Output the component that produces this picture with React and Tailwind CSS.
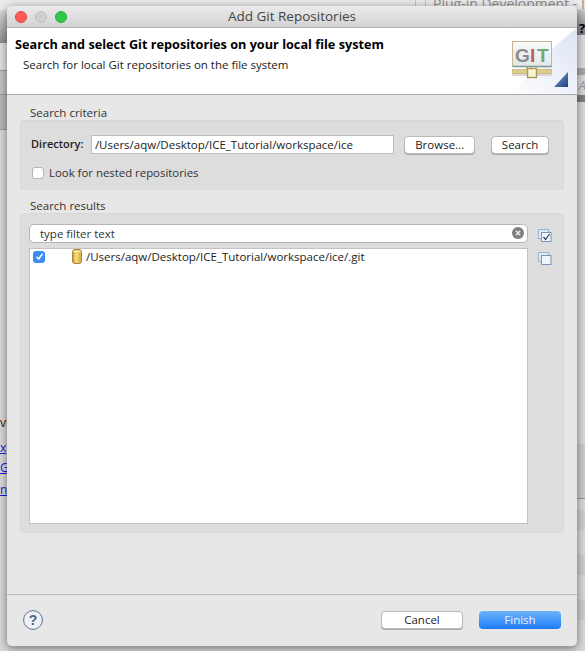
const FONT = "font-['Open_Sans','Liberation_Sans',sans-serif]";

function GitLogo() {
  return (
    <svg width="72" height="66" viewBox="0 0 72 66" className="absolute right-0 top-0">
      <defs>
        <linearGradient id="banner" x1="0" y1="1" x2="1" y2="0">
          <stop offset="0" stopColor="#ffffff" />
          <stop offset="0.5" stopColor="#eef1fa" />
          <stop offset="1" stopColor="#dde4f5" />
        </linearGradient>
        <linearGradient id="tri" x1="0" y1="0" x2="1" y2="1">
          <stop offset="0" stopColor="#86a5d4" />
          <stop offset="1" stopColor="#1f3f80" />
        </linearGradient>
        <linearGradient id="screen" x1="0" y1="0" x2="0" y2="1">
          <stop offset="0" stopColor="#fafafa" />
          <stop offset="1" stopColor="#e0e6e6" />
        </linearGradient>
      </defs>
      <path d="M0 66 C22 58 34 28 72 0 V66 Z" fill="url(#banner)" />
      <rect x="7.5" y="13.5" width="39" height="25" fill="url(#screen)" stroke="#c9b58f" />
      <path d="M7.5 38.5H46.5" stroke="#7d9a98" strokeWidth="1.5" />
      <text x="10" y="34" fontFamily="Liberation Sans, sans-serif" fontWeight="700" fontSize="19" fill="#8b8b8b">G</text>
      <text x="25" y="34" fontFamily="Liberation Sans, sans-serif" fontWeight="700" fontSize="19" fill="#b9605f">I</text>
      <text x="32" y="34" fontFamily="Liberation Sans, sans-serif" fontWeight="700" fontSize="19" fill="#6fa877">T</text>
      <path d="M7 47H47" stroke="#e2d5da" strokeWidth="2" />
      <rect x="7.5" y="41.5" width="39" height="4" fill="#dccf8c" stroke="#b7a65c" strokeWidth="0.6" />
      <path d="M22 39V41M26 39V41" stroke="#a89a58" strokeWidth="1.2" />
      <rect x="22.5" y="40.5" width="9" height="9" fill="#fbf3cf" stroke="#a89a58" strokeWidth="1.4" />
      <path d="M49 59 L63 59 L63 44 Z" fill="url(#tri)" />
    </svg>
  );
}

function MacButton({ children, className = '' }) {
  return (
    <button
      type="button"
      className={`h-[18px] bg-white rounded-[4px] border border-[#b9b9b9] shadow-[0_1px_0_#a9a9a9] text-[11.5px] leading-[16px] text-[#222] text-center ${className}`}
    >
      {children}
    </button>
  );
}

function BlueCheck() {
  return (
    <span className="w-3 h-3 rounded-[3px] bg-[#3b8df5] flex items-center justify-center shrink-0">
      <svg width="9" height="9" viewBox="0 0 9 9">
        <path d="M1.5 4.8 L3.6 7 L7.6 1.6" fill="none" stroke="#fff" strokeWidth="1.5" />
      </svg>
    </span>
  );
}

function StackIcon({ checked }) {
  return (
    <svg width="14" height="13" viewBox="0 0 14 13">
      <rect x="0.5" y="0.5" width="10" height="9" fill="#dfe8f3" stroke="#9fb3cf" />
      <rect x="3.5" y="3.5" width="9.5" height="9" fill="#f1f6fc" stroke="#7f95b5" />
      {checked && <path d="M5.5 8 L7.6 10.5 L11.5 5" fill="none" stroke="#2c3f5c" strokeWidth="1.2" />}
    </svg>
  );
}

function RepoIcon() {
  return (
    <svg width="10" height="15" viewBox="0 0 10 15" className="shrink-0">
      <defs>
        <linearGradient id="can" x1="0" y1="0" x2="1" y2="0">
          <stop offset="0" stopColor="#c99a2c" />
          <stop offset="0.4" stopColor="#f9df7c" />
          <stop offset="1" stopColor="#d4a535" />
        </linearGradient>
      </defs>
      <rect x="0.5" y="0.5" width="9" height="14" rx="2.5" fill="url(#can)" stroke="#a9853c" />
      <path d="M1 2.5H9" stroke="#fff3b8" />
    </svg>
  );
}

export default function App() {
  return (
    <div className={`relative w-[585px] h-[651px] overflow-hidden bg-[#d9d9d9] text-[#222] ${FONT}`}>
      {/* stuff behind the dialog */}
      <div className="absolute left-0 top-0 w-full h-[10px] bg-[#ececec]" />
      <div className="absolute left-0 top-[12px] w-[20px] h-[31px] bg-gradient-to-b from-[#d6d6d6] to-[#8f8f8f]" />
      <div className="absolute left-0 top-[43px] w-[20px] h-[27px] bg-[#e2e2e2]" />
      <div className="absolute left-0 top-[70px] w-[20px] h-[24px] bg-[#c4c4c4] border-t border-[#999]" />
      <div className="absolute left-0 top-[94px] w-[20px] h-[36px] bg-[#b9b9b9] border-y border-[#a0a0a0]" />
      <div className="absolute right-0 top-[9px] w-[10px] h-[26px] bg-gradient-to-b from-[#cfcfcf] to-[#7b7b7b]" />
      <div className="absolute right-0 top-[35px] w-[10px] h-[33px] bg-[#dedede]" />
      <div className="absolute right-0 top-[68px] w-[10px] h-[7px] bg-[#a8a8a8]" />
      <div className="absolute right-0 top-[95px] w-[10px] h-[7px] bg-[#7f7f7f]" />
      <div className="absolute right-0 top-[444px] w-[10px] h-[54px] bg-[#cdcdcd]" />
      <div className="absolute right-0 top-[498px] w-[10px] h-px bg-[#9a9a9a]" />
      <div className="absolute right-0 top-[510px] w-[10px] h-[20px] bg-[#cfcfcf]" />
      <div className="absolute right-0 top-[555px] w-[10px] h-[20px] bg-[#cfcfcf]" />
      <div className="absolute right-0 top-[600px] w-[10px] h-[20px] bg-[#cfcfcf]" />
      <div className="absolute left-[415px] top-0 h-[6px] w-[11px] border-x border-[#c4c4c4]" />
      <div className="absolute left-[433px] top-[-7px] text-[14px] text-[#8f8f8f] whitespace-nowrap">Plug-in Development - In</div>
      <div className="absolute left-[579px] top-[20px] text-[13px] leading-[16px] font-bold text-black">?</div>
      <div className="absolute left-[579px] top-[78px] text-[12px] leading-[16px] italic text-[#999]">A</div>
      <div className="absolute left-0 top-[414px] text-[12px] text-[#222]">vi</div>
      <div className="absolute left-0 top-[439px] text-[12px] text-[#1a1ae0] underline">x</div>
      <div className="absolute left-0 top-[459px] text-[12px] text-[#1a1ae0] underline">Gi</div>
      <div className="absolute left-0 top-[481px] text-[12px] text-[#1a1ae0] underline">n</div>

      {/* dialog */}
      <div className="absolute left-[7px] top-[6px] w-[570px] h-[640px] flex flex-col bg-[#e7e7e7] rounded-[5px] shadow-[0_2px_10px_rgba(0,0,0,0.5)] overflow-hidden">
        <div className="relative h-[22px] shrink-0 flex items-center justify-center bg-gradient-to-b from-[#ebebeb] to-[#d3d3d3] border-b border-[#b1b1b1]">
          <div className="absolute left-[8px] top-[5px] flex gap-2">
            <span className="w-3 h-3 rounded-full bg-[#fc5b57] border border-[#e2463f]" />
            <span className="w-3 h-3 rounded-full bg-[#d0d0d0] border border-[#bfbfbf]" />
            <span className="w-3 h-3 rounded-full bg-[#34c84a] border border-[#2aac3a]" />
          </div>
          <span className="text-[13.5px] text-[#444]">Add Git Repositories</span>
        </div>

        <div className="relative h-[67px] shrink-0 bg-white border-b border-[#a9a9a9] pl-2 pt-[8px]">
          <div className="text-[12.7px] leading-[16px] font-bold text-black">Search and select Git repositories on your local file system</div>
          <div className="text-[11.5px] leading-[16px] mt-[5px] ml-2 text-[#222]">Search for local Git repositories on the file system</div>
          <GitLogo />
        </div>

        <div className="flex-1 flex flex-col px-[13px] pt-[11px]">
          <div className="text-[11.5px] leading-[14px] pl-[10px] text-[#333]">Search criteria</div>
          <div className="h-[70px] shrink-0 rounded-[4px] bg-[#dddddd] border border-[#d7d7d7] pt-[14px] pl-[10px] pr-[14px]">
            <div className="flex items-center h-[19px]">
              <span className="w-[60px] text-[11px] font-semibold text-[#222]">Directory:</span>
              <div className="w-[304px] h-[19px] bg-white border border-[#bdbdbd] pl-[3px] text-[11.5px] leading-[17px] text-[#222] whitespace-nowrap">/Users/aqw/Desktop/ICE_Tutorial/workspace/ice</div>
              <MacButton className="w-[71px] ml-[10px]">Browse...</MacButton>
              <MacButton className="w-[58px] ml-[16px]">Search</MacButton>
            </div>
            <div className="flex items-center mt-[10px]">
              <span className="w-3 h-3 ml-[1px] rounded-[3px] bg-white border border-[#b5b5b5]" />
              <span className="ml-[5px] text-[11.4px] text-[#333]">Look for nested repositories</span>
            </div>
          </div>

          <div className="text-[11.5px] leading-[14px] pl-[10px] mt-[9px] text-[#333]">Search results</div>
          <div className="h-[320px] flex shrink-0 rounded-[4px] bg-[#dddddd] border border-[#d7d7d7] pt-[10px] pl-[8px]">
            <div className="w-[499px] flex flex-col">
              <div className="relative h-[19px] shrink-0 bg-white rounded-[5px] border border-[#b5b5b5] pl-[10px] text-[11.5px] leading-[17px] text-[#333]">
                type filter text
                <span className="absolute right-[3px] top-[2px] w-3 h-3 rounded-full bg-[#7d7d7d] flex items-center justify-center">
                  <svg width="6" height="6" viewBox="0 0 6 6">
                    <path d="M0.8 0.8 L5.2 5.2 M5.2 0.8 L0.8 5.2" stroke="#eee" strokeWidth="1.4" />
                  </svg>
                </span>
              </div>
              <div className="h-[276px] mt-[5px] bg-white border border-[#c3c3c3] pl-[3px]">
                <div className="flex items-center h-[15px]">
                  <BlueCheck />
                  <span className="ml-[27px]"><RepoIcon /></span>
                  <span className="ml-[4px] text-[11.5px] text-[#222] whitespace-nowrap">/Users/aqw/Desktop/ICE_Tutorial/workspace/ice/.git</span>
                </div>
              </div>
            </div>
            <div className="ml-[10px] flex flex-col gap-[10px] pt-[5px]">
              <StackIcon checked />
              <StackIcon />
            </div>
          </div>
        </div>

        <div className="h-[52px] shrink-0 border-t border-[#b9b9b9] flex items-center pl-[16px] pr-[16px] pb-[2px]">
          <svg width="20" height="20" viewBox="0 0 20 20">
            <circle cx="10" cy="10" r="9.4" fill="#eef0f4" stroke="#5b6f96" />
            <text x="10" y="15" textAnchor="middle" fontFamily="Liberation Sans, sans-serif" fontWeight="700" fontSize="14" fill="#4f648c">?</text>
          </svg>
          <MacButton className="w-[82px] ml-auto">Cancel</MacButton>
          <button type="button" className="w-[82px] h-[18px] ml-[16px] rounded-[4px] bg-gradient-to-b from-[#6cb3fa] to-[#1a7cf8] text-[11.5px] leading-[16px] text-[#eaf3ff] text-center">Finish</button>
        </div>
      </div>
    </div>
  );
}
